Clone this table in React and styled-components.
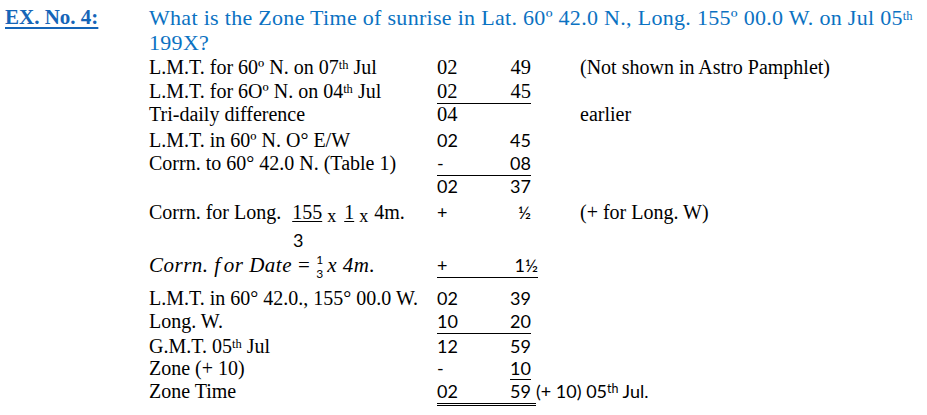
import React from "react";
import styled, { createGlobalStyle } from "styled-components";

const SERIF = `"Liberation Serif", "Times New Roman", serif`;
const SANS = `Lato, "Liberation Sans", sans-serif`;

const GlobalStyle = createGlobalStyle`
  html, body {
    margin: 0;
    padding: 0;
    background: #ffffff;
  }
  body {
    font-family: ${SERIF};
    color: #000000;
  }
`;

const Page = styled.div`
  width: 927px;
  height: 415px;
  box-sizing: border-box;
  padding: 5px 0 0 5px;
  overflow: hidden;
`;

const Header = styled.header`
  display: grid;
  grid-template-columns: 144px 1fr;
  line-height: 25px;
`;

const ExNo = styled.h2`
  margin: 0;
  font: inherit;
  font-size: 21px;
  font-weight: 700;
  color: #1565b8;
  text-decoration: underline;
  text-underline-offset: 3px;
  text-decoration-thickness: 1.5px;
  white-space: nowrap;
`;

const Question = styled.p`
  margin: 0;
  color: #0b72c2;
  font-size: 22px;
  letter-spacing: 0.3px;
  white-space: nowrap;
`;

const Sup = styled.sup`
  font-size: 12.5px;
  letter-spacing: 0;
  line-height: 0;
  vertical-align: 5px;
`;

const Working = styled.div`
  margin-left: 144px;
  display: flex;
  flex-direction: column;
`;

const Row = styled.div`
  display: flex;
  align-items: baseline;
  height: ${props => props.$h}px;
`;

const Label = styled.div`
  width: 288px;
  flex: none;
  font-size: 20px;
  line-height: 24px;
  white-space: nowrap;
`;

const Figures = styled.div`
  width: ${props => props.$w || 94}px;
  flex: none;
  display: flex;
  justify-content: space-between;
  box-sizing: border-box;
  padding-right: ${props => props.$pad || 0}px;
  font-family: ${props => props.$serif ? SERIF : SANS};
  font-size: ${props => props.$serif ? "20.5px" : "18px"};
  line-height: 22px;
  border-bottom: ${props =>
    props.$rule === "double" ? "3px double #000" :
    props.$rule ? "1px solid #000" : "1px solid transparent"};
`;

const Minutes = styled.span`
  display: inline-block;
  border-bottom: 1px solid ${props => props.$rule ? "#000" : "transparent"};
`;

const Note = styled.div`
  margin-left: ${props => props.$tight ? 0 : 49}px;
  font-family: ${props => props.$sans ? SANS : SERIF};
  font-size: ${props => props.$sans ? "18px" : "20px"};
  line-height: 22px;
  white-space: nowrap;
`;

const Under = styled.span`
  margin-left: ${props => props.$gap || 0}px;
  text-decoration: underline;
  text-underline-offset: 2px;
  text-decoration-thickness: 1px;
`;

const Times = styled.span`
  margin-left: 5px;
  font-size: 18px;
  vertical-align: -3px;
`;

const Tail = styled.span`
  margin-left: 6px;
`;

const Denominator = styled.span`
  padding-left: 144px;
  font-family: ${SANS};
  font-size: 18px;
`;

const MathLabel = styled(Label)`
  font-style: italic;
  font-size: 21px;
  letter-spacing: 0.5px;
`;

const Italic = styled.span`
  margin-right: ${props => props.$gap || 0}px;
`;

const Equals = styled.span`
  font-style: normal;
  margin: 0 6px 0 6px;
`;

const Fraction = styled.span`
  display: inline-flex;
  flex-direction: column;
  align-items: center;
  vertical-align: middle;
  font-family: ${SANS};
  font-style: normal;
  font-size: 12px;
  letter-spacing: 0;
  line-height: 14px;
  margin-right: 4px;
`;

const rows = [
  { h: 24, label: <>L.M.T. for 60º N. on 07<Sup>th</Sup> Jul</>, hh: "02", mm: "49", serif: true, note: "(Not shown in Astro Pamphlet)" },
  { h: 23, label: <>L.M.T. for 6Oº N. on 04<Sup>th</Sup> Jul</>, hh: "02", mm: "45", serif: true, rule: true },
  { h: 25.5, label: "Tri-daily difference", hh: "04", mm: "", serif: true, note: "earlier" },
  { h: 23.5, label: "L.M.T. in 60º N. O° E/W", hh: "02", mm: "45" },
  { h: 24, label: "Corrn. to 60° 42.0 N. (Table 1)", hh: "-", mm: "08", rule: true },
  { h: 25, label: "", hh: "02", mm: "37" },
  {
    h: 27.5,
    label: (
      <>
        Corrn. for Long.<Under $gap={11}>155</Under><Times>x</Times>
        <Under $gap={8}>1</Under><Times>x</Times><Tail>4m.</Tail>
      </>
    ),
    hh: "+", mm: "½", note: "(+ for Long. W)"
  },
  { h: 25, denominator: "3" },
  { h: 33, math: true, hh: "+", mm: "1½", rule: true, w: 101 },
  { h: 23, label: "L.M.T. in 60° 42.0., 155° 00.0 W.", hh: "02", mm: "39" },
  { h: 25, label: "Long. W.", hh: "10", mm: "20", rule: true },
  { h: 22.5, label: <>G.M.T. 05<Sup>th</Sup> Jul</>, hh: "12", mm: "59" },
  { h: 23, label: "Zone (+ 10)", hh: "-", mm: "10", minuteRule: true },
  {
    h: 24, label: "Zone Time", hh: "02", mm: "59", rule: "double", w: 99, pad: 5,
    note: <>(+ 10) 05<Sup>th</Sup> Jul.</>, tight: true, sansNote: true
  }
];

function WorkingRow({ row }) {
  if (row.denominator) {
    return (
      <Row $h={row.h}>
        <Label><Denominator>{row.denominator}</Denominator></Label>
      </Row>
    );
  }

  const label = row.math ? (
    <MathLabel>
      Corrn. <Italic $gap={3}>f</Italic>or Date<Equals>=</Equals>
      <Fraction><span>1</span><span>3</span></Fraction>x 4m.
    </MathLabel>
  ) : (
    <Label>{row.label}</Label>
  );

  return (
    <Row $h={row.h}>
      {label}
      <Figures $serif={row.serif} $rule={row.rule} $w={row.w} $pad={row.pad}>
        <span>{row.hh}</span>
        <Minutes $rule={row.minuteRule}>{row.mm}</Minutes>
      </Figures>
      {row.note && (
        <Note $tight={row.tight} $sans={row.sansNote}>{row.note}</Note>
      )}
    </Row>
  );
}

export default function App() {
  return (
    <>
      <GlobalStyle />
      <Page>
        <Header>
          <ExNo>EX. No. 4:</ExNo>
          <Question>
            What is the Zone Time of sunrise in Lat. 60º 42.0 N., Long. 155º 00.0 W. on Jul 05<Sup>th</Sup>
            <br />
            199X?
          </Question>
        </Header>
        <Working>
          {rows.map((row, i) => <WorkingRow key={i} row={row} />)}
        </Working>
      </Page>
    </>
  );
}
